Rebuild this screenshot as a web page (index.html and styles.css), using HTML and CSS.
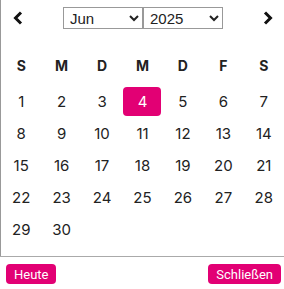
FILE: index.html
```html
<!DOCTYPE html>
<html lang="de">
<head>
    <meta charset="UTF-8">
    <meta name="viewport" content="width=device-width, initial-scale=1.0">
    <title>Datum</title>
    <link rel="stylesheet" href="styles.css">
</head>
<body>
    <div class="picker">
        <div class="nav">
            <button class="arrow" aria-label="Zurück">
                <svg width="10" height="14" viewBox="0 0 10 14"><path d="M8 1.5 L2.5 7 L8 12.5" fill="none" stroke="#111" stroke-width="3"/></svg>
            </button>
            <div class="selects">
                <select class="month">
                    <option>Jan</option><option>Feb</option><option>Mär</option><option>Apr</option>
                    <option>Mai</option><option selected>Jun</option><option>Jul</option><option>Aug</option>
                    <option>Sep</option><option>Okt</option><option>Nov</option><option>Dez</option>
                </select>
                <select class="year">
                    <option>2024</option><option selected>2025</option><option>2026</option>
                </select>
            </div>
            <button class="arrow" aria-label="Weiter">
                <svg width="10" height="14" viewBox="0 0 10 14"><path d="M2 1.5 L7.5 7 L2 12.5" fill="none" stroke="#111" stroke-width="3"/></svg>
            </button>
        </div>

        <div class="days">
            <div class="wd">S</div><div class="wd">M</div><div class="wd">D</div><div class="wd">M</div>
            <div class="wd">D</div><div class="wd">F</div><div class="wd">S</div>

            <div class="day">1</div><div class="day">2</div><div class="day">3</div><div class="day"><span class="active">4</span></div>
            <div class="day">5</div><div class="day">6</div><div class="day">7</div>

            <div class="day">8</div><div class="day">9</div><div class="day">10</div><div class="day">11</div>
            <div class="day">12</div><div class="day">13</div><div class="day">14</div>

            <div class="day">15</div><div class="day">16</div><div class="day">17</div><div class="day">18</div>
            <div class="day">19</div><div class="day">20</div><div class="day">21</div>

            <div class="day">22</div><div class="day">23</div><div class="day">24</div><div class="day">25</div>
            <div class="day">26</div><div class="day">27</div><div class="day">28</div>

            <div class="day">29</div><div class="day">30</div>
        </div>
    </div>
    <div class="footer">
        <button class="btn">Heute</button>
        <button class="btn">Schließen</button>
    </div>
</body>
</html>
```
FILE: styles.css
```css
body {
    margin: 0;
    width: 284px;
    font-family: Inter, "Noto Sans", sans-serif;
    color: #222;
    background: #fff;
}

.picker {
    border-left: 1px solid #999;
    height: 256px;
}

.nav {
    display: flex;
    align-items: center;
    justify-content: space-between;
    padding: 7px 11px 0 12px;
    height: 22px;
}

.arrow {
    border: none;
    background: none;
    padding: 0;
    width: 10px;
    height: 14px;
    display: flex;
}

.selects {
    display: flex;
}

.selects select {
    width: 80px;
    height: 22px;
    font-family: "Liberation Sans", Arial, sans-serif;
    font-size: 15px;
    color: #222;
    border: 1px solid #999;
    border-radius: 0;
    background: #fff;
    padding: 0 2px;
}

.days {
    display: grid;
    grid-template-columns: repeat(7, 1fr);
    grid-template-rows: 37px;
    grid-auto-rows: 32px;
    margin-top: 19px;
}

.wd {
    display: flex;
    align-items: center;
    justify-content: center;
    font-weight: 700;
    font-size: 14px;
    height: 34px;
}

.day {
    display: flex;
    align-items: center;
    justify-content: center;
    font-size: 15px;
}

.active {
    display: flex;
    align-items: center;
    justify-content: center;
    width: 38px;
    height: 29px;
    background: #e20074;
    color: #fff;
    border-radius: 4px;
}

.footer {
    border-top: 1px solid #aaa;
    display: flex;
    justify-content: space-between;
    padding: 7px 3px 0 6px;
}

.btn {
    background: #e20074;
    color: #fff;
    border: none;
    border-radius: 4px;
    font-family: Roboto, sans-serif;
    font-size: 13px;
    height: 20px;
    padding: 0 8px;
}
```
